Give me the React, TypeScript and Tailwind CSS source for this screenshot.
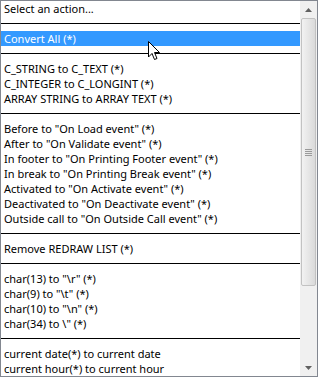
import React from 'react';

type Item = { label?: string; sep?: boolean; selected?: boolean };

const items: Item[] = [
  { label: 'Select an action...' },
  { sep: true },
  { label: 'Convert All (*)', selected: true },
  { sep: true },
  { label: 'C_STRING to C_TEXT (*)' },
  { label: 'C_INTEGER to C_LONGINT (*)' },
  { label: 'ARRAY STRING to ARRAY TEXT (*)' },
  { sep: true },
  { label: 'Before to "On Load event" (*)' },
  { label: 'After to "On Validate event" (*)' },
  { label: 'In footer to "On Printing Footer event" (*)' },
  { label: 'In break to "On Printing Break event" (*)' },
  { label: 'Activated to "On Activate event" (*)' },
  { label: 'Deactivated to "On Deactivate event" (*)' },
  { label: 'Outside call to "On Outside Call event" (*)' },
  { sep: true },
  { label: 'Remove REDRAW LIST (*)' },
  { sep: true },
  { label: 'char(13) to "\\r" (*)' },
  { label: 'char(9) to "\\t" (*)' },
  { label: 'char(10) to "\\n" (*)' },
  { label: 'char(34) to \\" (*)' },
  { sep: true },
  { label: 'current date(*) to current date' },
  { label: 'current hour(*) to current hour' },
];

function Cursor() {
  return (
    <svg className="absolute left-[147px] top-[40px]" width="13" height="20" viewBox="0 0 13 20">
      <path
        d="M0.5 0.5 L0.5 16 L4 12.5 L6.5 18.5 L9 17.5 L6.5 11.5 L11.5 11.5 Z"
        fill="#fff"
        stroke="#000"
        strokeWidth="1"
      />
    </svg>
  );
}

function Scrollbar() {
  return (
    <div className="flex w-[17px] flex-col bg-[#f0f0f0]">
      <div className="flex h-[17px] items-center justify-center">
        <svg width="7" height="4" viewBox="0 0 7 4">
          <path d="M3.5 0 L7 4 L0 4 Z" fill="#606060" />
        </svg>
      </div>
      <div className="mx-[1px] flex h-[268px] items-center justify-center rounded-[2px] border border-[#c2c2c2] bg-gradient-to-r from-[#f2f2f2] via-[#e6e6e6] to-[#dadada]">
        <div className="flex flex-col gap-[1px]">
          <div className="h-[1px] w-[7px] bg-[#9a9a9a]" />
          <div className="h-[1px] w-[7px] bg-[#9a9a9a]" />
          <div className="h-[1px] w-[7px] bg-[#9a9a9a]" />
          <div className="h-[1px] w-[7px] bg-[#9a9a9a]" />
        </div>
      </div>
      <div className="flex-1" />
      <div className="flex h-[17px] items-center justify-center">
        <svg width="7" height="4" viewBox="0 0 7 4">
          <path d="M0 0 L7 0 L3.5 4 Z" fill="#606060" />
        </svg>
      </div>
    </div>
  );
}

export default function App() {
  return (
    <div
      className="relative flex h-[377px] w-[318px] border border-[#828790] bg-white text-[11px] text-black"
      style={{ fontFamily: '"Noto Sans", "Open Sans", sans-serif' }}
    >
      <div className="flex flex-1 flex-col">
        {items.map((it, i) =>
          it.sep ? (
            <div key={i} className="flex h-[15px] items-center">
              <div className="h-[1px] w-full bg-black" />
            </div>
          ) : (
            <div
              key={i}
              className={`flex h-[15px] items-center whitespace-nowrap pl-[3px] leading-[14px] ${
                it.selected ? 'bg-[#3399ff] text-white' : ''
              }`}
            >
              {it.label}
            </div>
          )
        )}
      </div>
      <Scrollbar />
      <Cursor />
    </div>
  );
}
